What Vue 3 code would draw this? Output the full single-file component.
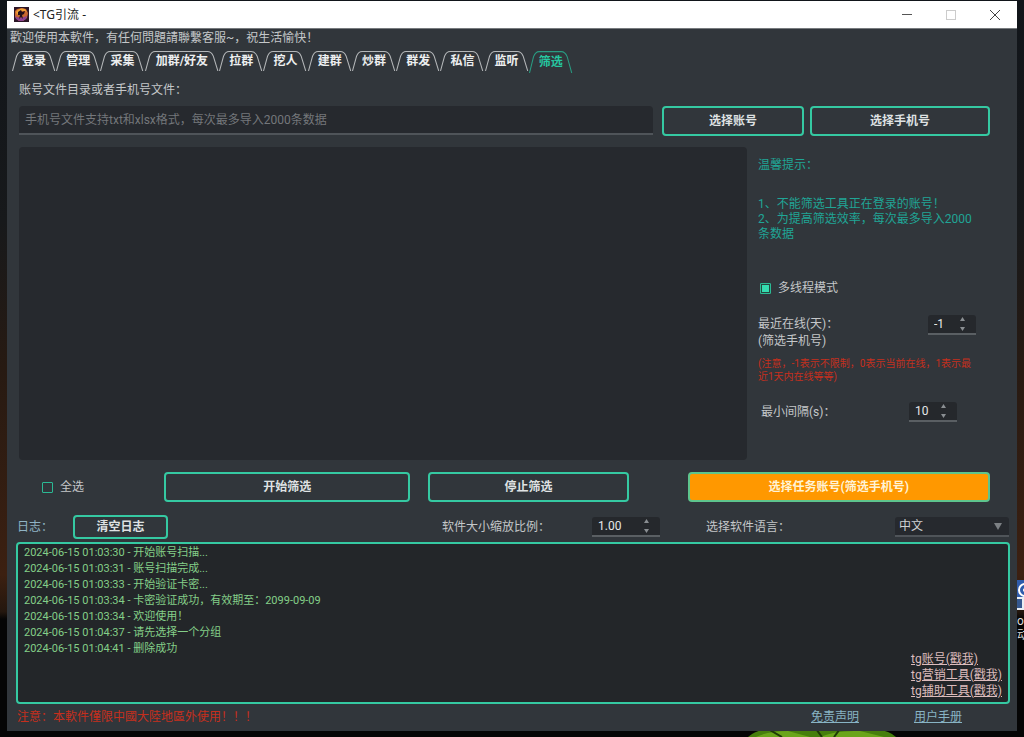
<script setup>
import { ref } from 'vue'

const tabs = [
  { name: '登录' }, { name: '管理' }, { name: '采集' }, { name: '加群/好友', wide: true },
  { name: '拉群' }, { name: '挖人' }, { name: '建群' }, { name: '炒群' },
  { name: '群发' }, { name: '私信' }, { name: '监听' }, { name: '筛选' }
]
const active = ref('筛选')
const multiThread = ref(true)
const selectAll = ref(false)
const days = ref('-1')
const gap = ref('10')
const scale = ref('1.00')
const lang = ref('zh')
const path = ref('')
const logs = ref([
  '2024-06-15 01:03:30 - 开始账号扫描...',
  '2024-06-15 01:03:31 - 账号扫描完成...',
  '2024-06-15 01:03:33 - 开始验证卡密...',
  '2024-06-15 01:03:34 - 卡密验证成功，有效期至：2099-09-09',
  '2024-06-15 01:03:34 - 欢迎使用！',
  '2024-06-15 01:04:37 - 请先选择一个分组',
  '2024-06-15 01:04:41 - 删除成功'
])
const tabPath = (w) =>
  `M0.5 19 L4.5 5 Q6.5 0.5 10 0.5 H${w - 12} Q${w - 8} 0.5 ${w - 6} 5 L${w - 1.5} 19`
</script>

<template>
  <div class="desktop">
    <svg class="leaves" viewBox="0 0 150 8" aria-hidden="true">
      <path d="M0 8 Q8 0 26 0 H128 Q142 2 148 8Z" fill="#467f0c" />
      <path d="M8 8 Q20 2 40 2 L62 8Z M72 8 Q88 1 112 2 L136 8Z" fill="#6aa51a" />
      <path d="M20 0 L34 8 M68 0 L74 8 M92 0 L86 8" stroke="#1d3a05" stroke-width="2" />
    </svg>
    <div class="shortcut" aria-hidden="true">
      <svg width="30" height="30" viewBox="0 0 30 30">
        <rect width="30" height="30" fill="#e8edf3" />
        <rect width="30" height="17" fill="#2f5cab" />
        <circle cx="8" cy="10" r="6" fill="none" stroke="#fff" stroke-width="2" />
        <circle cx="8" cy="10" r="2" fill="#fff" />
        <path d="M0 19h5v9h-5z" fill="#35588f" />
      </svg>
      <span>or</span><span>动</span>
    </div>

    <div class="window">
      <header class="titlebar">
        <svg class="logo" width="15" height="15" viewBox="0 0 15 15" aria-hidden="true">
          <rect width="15" height="15" fill="#2b1526" />
          <path d="M1 10V4L3 2L8 1L12 2L14 6L13 11L9 14H5Z" fill="#c9672f" />
          <path d="M1 9Q5 12 13 9L12 12L9 14H5L2 12Z" fill="#8c4390" />
          <path d="M2 5Q5 0 11 2L13 5L11 4L6 4L3 8Z" fill="#f2a236" />
          <path d="M4 5L7 3L8 5L11 4L10 7L8 8L9 12L7 10L5 12L6 8L4 8Z" fill="#251019" />
        </svg>
        <h1>&lt;TG引流 -</h1>
        <div class="controls">
          <button type="button" aria-label="最小化"><svg width="10" height="10" viewBox="0 0 10 10"><path d="M0 4.5H10" stroke="#555" /></svg></button>
          <button type="button" aria-label="最大化" disabled><svg width="10" height="10" viewBox="0 0 10 10"><rect x=".5" y=".5" width="9" height="9" fill="none" stroke="#ccc" /></svg></button>
          <button type="button" aria-label="关闭"><svg width="10" height="10" viewBox="0 0 10 10"><path d="M0 0L10 10M10 0L0 10" stroke="#444" /></svg></button>
        </div>
      </header>

      <p class="welcome">歡迎使用本軟件，有任何問題請聯繫客服~，祝生活愉快！</p>

      <nav class="tabs">
        <button
          v-for="t in tabs" :key="t.name" type="button"
          :class="{ wide: t.wide, active: active === t.name }" @click="active = t.name"
        >
          <svg :viewBox="`0 0 ${t.wide ? 74 : 44} 19`" preserveAspectRatio="none" aria-hidden="true">
            <path :d="tabPath(t.wide ? 74 : 44)" fill="none" stroke="currentColor" />
          </svg>
          <span>{{ t.name }}</span>
        </button>
      </nav>

      <main>
        <label class="path-label" for="path">账号文件目录或者手机号文件：</label>
        <div class="path-row">
          <input id="path" v-model="path" class="path" type="text" placeholder="手机号文件支持txt和xlsx格式，每次最多导入2000条数据">
          <button type="button" class="btn account">选择账号</button>
          <button type="button" class="btn phone">选择手机号</button>
        </div>

        <div class="work">
          <section class="results" aria-label="账号列表"></section>
          <aside>
            <h2>温馨提示：</h2>
            <p class="tips">1、不能筛选工具正在登录的账号！<br>2、为提高筛选效率，每次最多导入2000条数据</p>
            <label class="check multi"><input v-model="multiThread" type="checkbox"><span>多线程模式</span></label>
            <div class="field days">
              <label for="days">最近在线(天)：<br>(筛选手机号)</label>
              <div class="spin">
                <input id="days" v-model="days" type="number">
                <span class="steps"><button type="button" aria-label="增加" class="up"></button><button type="button" aria-label="减少" class="down"></button></span>
              </div>
            </div>
            <p class="note">(注意，-1表示不限制，0表示当前在线，1表示最近1天内在线等等)</p>
            <div class="field gap">
              <label for="gap">最小间隔(s)：</label>
              <div class="spin">
                <input id="gap" v-model="gap" type="number">
                <span class="steps"><button type="button" aria-label="增加" class="up"></button><button type="button" aria-label="减少" class="down"></button></span>
              </div>
            </div>
          </aside>
        </div>

        <div class="actions">
          <label class="check all"><input v-model="selectAll" type="checkbox"><span>全选</span></label>
          <button type="button" class="btn start">开始筛选</button>
          <button type="button" class="btn stop">停止筛选</button>
          <button type="button" class="btn task">选择任务账号(筛选手机号)</button>
        </div>
      </main>

      <div class="log-bar">
        <span class="log-title">日志：</span>
        <button type="button" class="btn clear" @click="logs = []">清空日志</button>
        <label class="scale-label" for="scale">软件大小缩放比例：</label>
        <div class="spin scale">
          <input id="scale" v-model="scale" type="number" step="0.01">
          <span class="steps"><button type="button" aria-label="增加" class="up"></button><button type="button" aria-label="减少" class="down"></button></span>
        </div>
        <label class="lang-label" for="lang">选择软件语言：</label>
        <div class="select">
          <select id="lang" v-model="lang"><option value="zh">中文</option></select>
        </div>
      </div>

      <section class="log">
        <ul><li v-for="l in logs" :key="l">{{ l }}</li></ul>
        <div class="promo">
          <a href="#">tg账号(戳我)</a>
          <a href="#">tg营销工具(戳我)</a>
          <a href="#">tg辅助工具(戳我)</a>
        </div>
      </section>

      <footer>
        <p>注意：本軟件僅限中國大陸地區外使用！！！</p>
        <a href="#">免责声明</a>
        <a href="#">用户手册</a>
      </footer>
    </div>
  </div>
</template>

<style>
body { margin: 0; background: #050505; }
</style>

<style scoped>
* { box-sizing: border-box; }
h1, h2, p, ul { margin: 0; padding: 0; font-weight: 400; }
button, input, select { font: inherit; color: inherit; margin: 0; padding: 0; border: 0; background: none; }
input, select { min-width: 0; outline: none; }

.desktop {
  position: relative;
  min-height: 100vh;
  display: flex;
  padding: 1px 7px 6px;
  overflow: hidden;
  font: 12px/16px Roboto, "Noto Sans CJK SC", sans-serif;
  color: #c4c7c9;
  background: linear-gradient(#11151a 0, #17191b 30%, #271a12 50%, #3c2011 78%, #24170e 83%, #050505 84%);
}
.leaves { position: absolute; bottom: 0; right: 126px; width: 150px; height: 8px; }
.shortcut {
  position: absolute; top: 580px; right: -23px; width: 30px;
  display: flex; flex-direction: column; color: #ddd; line-height: 14px;
}
.shortcut svg { margin-bottom: 4px; }

.window { position: relative; flex: 1; display: flex; flex-direction: column; min-width: 0; background: #31363b; }
.titlebar {
  display: flex; align-items: center; height: 28px; padding-left: 7px;
  background: #fff; border-bottom: 1px solid #777b7e; color: #222;
}
.titlebar h1 { flex: 1; margin-left: 4px; font: 12px/16px "Noto Sans", "Noto Sans CJK SC", sans-serif; }
.controls { display: flex; }
.controls button { width: 44px; height: 27px; display: grid; place-items: center; }

.welcome { padding: 1px 3px 0; }
.tabs { display: flex; width: 561px; max-width: 100%; margin: 5px 0 0 5px; }
.tabs button {
  position: relative; flex: 44 1 0; height: 20px; line-height: 20px;
  color: #eceeef; font-weight: 700; white-space: nowrap;
}
.tabs .wide { flex-grow: 74; }
.tabs .active { height: 22px; color: #26c6a0; }
.tabs svg { position: absolute; left: 0; top: 0; width: 100%; height: 100%; opacity: .7; }
.tabs button span { display: block; height: 20px; }

main { flex: 1; display: flex; flex-direction: column; padding: 9px 27px 0 12px; }
.path-label { display: block; }
.path-row { display: flex; margin-top: 8px; }
.path {
  flex: 1; height: 29px; padding: 0 6px; color: #c4c7c9;
  background: #26292e; border-bottom: 2px solid #4f5459; border-radius: 4px 4px 0 0;
}
.path::placeholder { color: #74777b; opacity: 1; }
.btn {
  height: 30px; border: 2px solid #35c9a2; border-radius: 4px;
  color: #dfe2e3; font-weight: 700; text-align: center; white-space: nowrap;
}
.account { width: 142px; margin-left: 9px; }
.phone { width: 180px; margin-left: 6px; }

.work { flex: 1; display: flex; margin-top: 11px; }
.results { flex: 1; background: #26292e; border-radius: 4px; }
aside { width: 243px; padding: 10px 0 0 11px; }
h2 { font-size: 12px; line-height: 16px; color: #20a596; }
.tips { width: 220px; margin-top: 24px; line-height: 15px; color: #20a596; }
.check { display: flex; align-items: center; }
.check input {
  appearance: none; width: 11px; height: 11px; margin-right: 7px;
  border: 1px solid #2bb994; border-radius: 1px;
}
.check input:checked { background: #35dcb0; box-shadow: inset 0 0 0 1px #25493f; }
.multi { margin: 38px 0 0 2px; }
.field { display: flex; justify-content: space-between; align-items: flex-start; }
.days { margin-top: 19px; padding-right: 14px; line-height: 17px; }
.days label { padding-top: 1px; }
.gap { margin-top: 19px; padding: 0 33px 0 3px; }
.gap label { padding-top: 2px; }
.note { width: 222px; margin-top: 7px; font-size: 10px; line-height: 13px; color: #c62f1d; }

.spin {
  display: flex; align-items: center; width: 48px; height: 20px;
  background: #25282c; border-bottom: 2px solid #5a5f63; border-radius: 3px 3px 0 0;
}
.spin input { flex: 1; width: 0; padding-left: 6px; appearance: textfield; color: #e6e8e9; line-height: 16px; }
.spin input::-webkit-inner-spin-button { appearance: none; margin: 0; }
.steps { display: flex; flex-direction: column; gap: 6px; margin-right: 11px; }
.steps button { width: 5px; height: 4px; background: #8a8e92; }
.up { clip-path: polygon(50% 0, 100% 100%, 0 100%); }
.down { clip-path: polygon(0 0, 100% 0, 50% 100%); }

.actions { display: flex; margin-top: 12px; }
.all { width: 122px; margin-left: 23px; }
.start { flex: 247; }
.stop { flex: 200; margin-left: 18px; }
.task { flex: 304; margin-left: 59px; background: #ff9800; border-color: #5ec58d; color: #fff3d6; }

.log-bar { display: flex; align-items: center; margin-top: 12px; padding: 0 8px 0 10px; height: 26px; }
.log-title { width: 56px; color: #8fb3c4; }
.clear { width: 95px; height: 24px; line-height: 18px; }
.scale-label { margin-left: auto; width: 150px; }
.scale { width: 68px; }
.lang-label { margin-left: 46px; width: 189px; }
.select {
  display: flex; align-items: center; width: 114px; height: 20px;
  background: #26292e; border-bottom: 2px solid #4f5459; border-radius: 3px 3px 0 0;
}
.select::after { content: ""; width: 8px; height: 7px; margin: 1px 7px 0 0; background: #7c8084; clip-path: polygon(0 0, 100% 0, 50% 100%); }
.select select { flex: 1; appearance: none; padding-left: 4px; line-height: 16px; color: #ced1d3; }

.log {
  display: flex; justify-content: space-between; min-height: 162px; margin: 2px 7px 0 9px; padding: 1px 6px 3px 6px;
  background: #232629; border: 2px solid #35c9a2; border-radius: 4px;
}
.log ul { list-style: none; font-size: 11px; line-height: 16px; color: #83cf88; }
.promo { display: flex; flex-direction: column; align-self: flex-end; }
.promo a { color: #dcbcbc; line-height: 16px; }

footer { display: flex; align-items: center; height: 27px; padding: 0 55px 1px 10px; }
footer p { flex: 1; color: #c62f1d; }
footer a { margin-left: 55px; color: #88b4c4; }
</style>
